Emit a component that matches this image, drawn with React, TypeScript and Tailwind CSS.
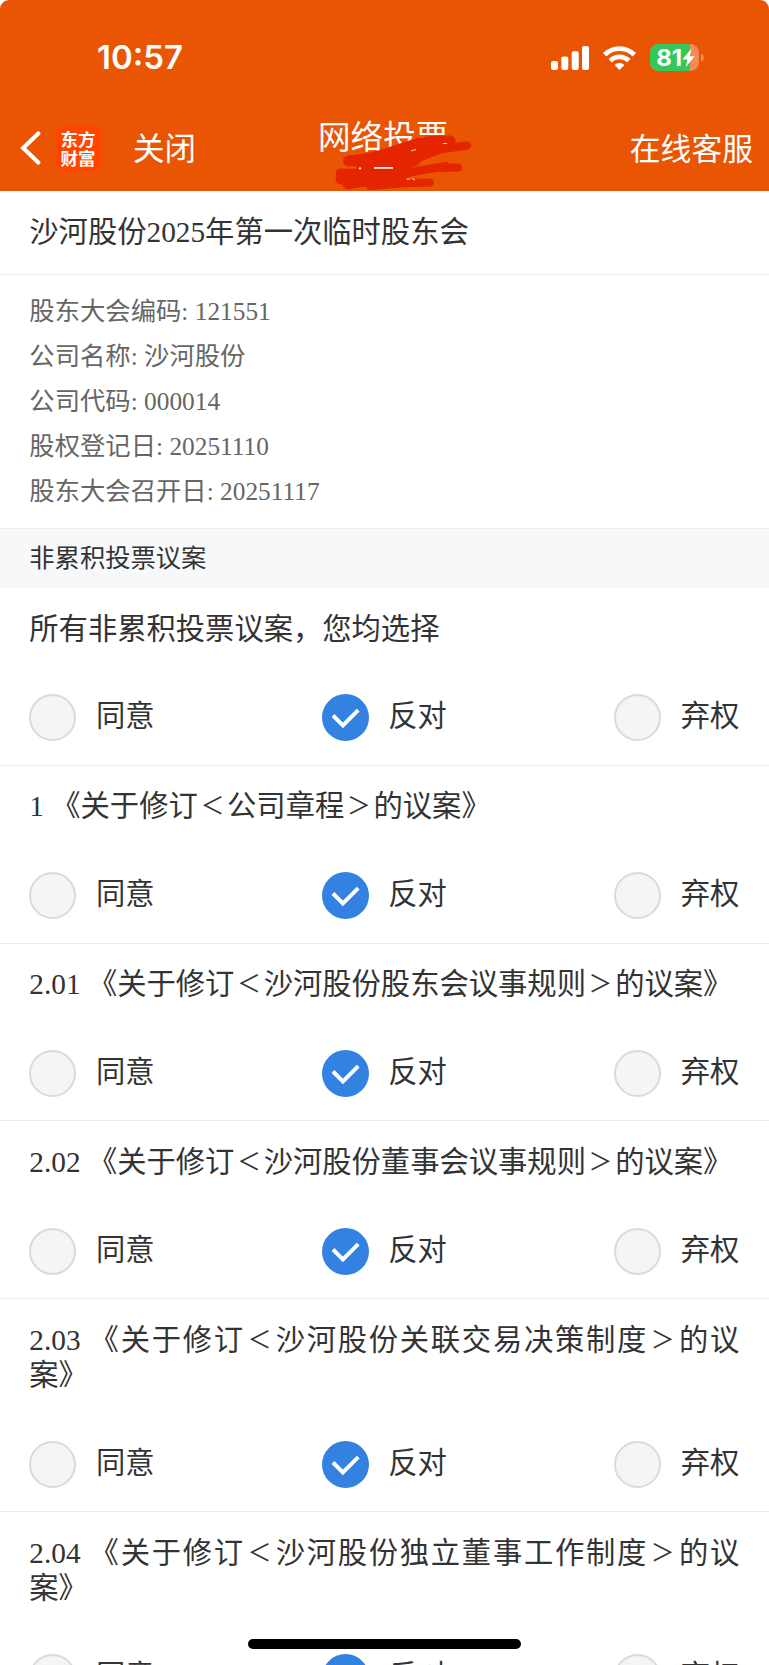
import React, { useState } from 'react';

type Choice = 'agree' | 'against' | 'abstain';

interface Proposal {
  id: string;
  title: string;
}

const OPTIONS: { value: Choice; label: string }[] = [
  { value: 'agree', label: '同意' },
  { value: 'against', label: '反对' },
  { value: 'abstain', label: '弃权' },
];

const MEETING_INFO = [
  { label: '股东大会编码', value: '121551' },
  { label: '公司名称', value: '沙河股份' },
  { label: '公司代码', value: '000014' },
  { label: '股权登记日', value: '20251110' },
  { label: '股东大会召开日', value: '20251117' },
];

const PROPOSALS: Proposal[] = [
  { id: 'all', title: '所有非累积投票议案，您均选择' },
  { id: '1', title: '1 《关于修订＜公司章程＞的议案》' },
  { id: '2.01', title: '2.01 《关于修订＜沙河股份股东会议事规则＞的议案》' },
  { id: '2.02', title: '2.02 《关于修订＜沙河股份董事会议事规则＞的议案》' },
  { id: '2.03', title: '2.03 《关于修订＜沙河股份关联交易决策制度＞的议案》' },
  { id: '2.04', title: '2.04 《关于修订＜沙河股份独立董事工作制度＞的议案》' },
];

const StatusBar: React.FC = () => (
  <div className="h-[115px] pl-[97px] pr-[65px] flex items-center justify-between">
    <span className="font-['Inter',sans-serif] text-[33px] font-semibold leading-none">10:57</span>
    <div className="flex items-center">
      <svg width="38" height="24" viewBox="0 0 38 24" fill="currentColor">
        <rect x="0" y="15" width="7" height="9" rx="2" />
        <rect x="10.3" y="10.5" width="7" height="13.5" rx="2" />
        <rect x="20.7" y="5.3" width="7" height="18.7" rx="2" />
        <rect x="31" y="0" width="7" height="24" rx="2" />
      </svg>
      <svg className="ml-[14px]" width="33" height="24" viewBox="0 0 33 24" fill="none" stroke="currentColor" strokeWidth="4.8">
        <path d="M1.7 8.8 A21 21 0 0 1 31.3 8.8" />
        <path d="M7.2 14.8 A13.2 13.2 0 0 1 25.8 14.8" />
        <path d="M16.5 24 L11.6 19 A7.2 7.2 0 0 1 21.4 19 Z" fill="currentColor" stroke="none" />
      </svg>
      <svg className="ml-[14px]" width="54" height="27" viewBox="0 0 54 27">
        <clipPath id="battery">
          <rect width="49" height="27" rx="8.5" />
        </clipPath>
        <g clipPath="url(#battery)">
          <rect width="49" height="27" fill="#f28b54" />
          <rect width="40" height="27" fill="#34c759" />
        </g>
        <path d="M51 9.5 Q53.8 10.5 53.8 13.5 T51 17.5 Z" fill="#f28b54" />
        <text x="6.2" y="21.6" fill="#fff" fontFamily="Inter, sans-serif" fontSize="22.5" fontWeight="700" textLength="26" lengthAdjust="spacingAndGlyphs">81</text>
        <path d="M41.5 4.5 L32.3 15.4 H37.4 L35.8 23 L44.8 12.2 H39.7 Z" fill="#fff" />
      </svg>
    </div>
  </div>
);

const NavBar: React.FC = () => (
  <div className="relative h-[76px] pl-5 pr-[16px] pb-[11px] flex items-center justify-between font-['Noto_Sans_CJK_SC',sans-serif] leading-none">
    <div className="flex items-center">
      <svg width="21" height="34" viewBox="0 0 21 34" fill="none" stroke="currentColor" strokeWidth="4.2" strokeLinecap="round">
        <path d="M18.3 2.5 L3.2 17 L18.3 31.5" />
      </svg>
      <div className="ml-[14px] w-[46px] h-[46px] rounded-[9px] bg-[#ff4500] flex flex-col items-center justify-center text-[17.5px] font-bold leading-[19px]">
        <span>东方</span>
        <span>财富</span>
      </div>
      <span className="ml-8 pb-[2px] text-[31.5px]">关闭</span>
    </div>
    <h1 className="absolute left-[318px] top-[4px] text-[32.6px]">网络投票</h1>
    <span className="pb-[1px] text-[30.8px]">在线客服</span>
    {/* red marker strokes hiding the subtitle */}
    <svg className="absolute left-[330px] top-[15px]" width="145" height="61" viewBox="330 130 145 61" fill="none" stroke="#e52400" strokeLinecap="round" strokeLinejoin="round">
      <path strokeWidth="11" d="M348.5 161 Q372 160 398 150 T444 141 L450 141 L436 149 L400 160 L362 167" />
      <path strokeWidth="8.5" d="M467 145.5 L441 149 L402 164 L376 173 L340 173" />
      <path strokeWidth="11" d="M341 179 L380 175 L415 160 M348 184 L378 178 L408 172" />
      <path strokeWidth="8" d="M458 167.5 L436 168 L400 174 L380 182 L347 184 M446 166 L410 172" />
      <path strokeWidth="8" d="M370 186 L402 178 M372 186 L400 183.5 L430 182.5" />
      <path stroke="#fff" strokeWidth="1.8" strokeLinecap="butt" d="M359 168.3 H361 M374 167.8 H393" />
      <path stroke="#fbd5c8" strokeWidth="1" strokeLinecap="butt" d="M407 179.4 L410 179 M412 178.5 L415 180 M411 151 L416 149.5 M443 143.5 H447" />
    </svg>
  </div>
);

interface RadioOptionProps {
  label: string;
  checked: boolean;
  onSelect: () => void;
}

const RadioOption: React.FC<RadioOptionProps> = ({ label, checked, onSelect }) => (
  <button onClick={onSelect} className="flex items-center">
    {checked ? (
      <span className="w-[47px] h-[47px] rounded-full bg-[#3382e2] flex items-center justify-center">
        <svg width="47" height="47" viewBox="0 0 47 47" fill="none" stroke="#fff" strokeWidth="3.9">
          <path d="M11 21.5 L20.9 31.4 L36.2 16.1" />
        </svg>
      </span>
    ) : (
      <span className="w-[47px] h-[47px] rounded-full bg-[#f5f5f5] border-2 border-[#dadada]" />
    )}
    <span className="ml-[19.6px] mb-[2px] leading-[35px]">{label}</span>
  </button>
);

// full-width angle brackets are drawn smaller than the em box they sit in
const ProposalTitle: React.FC<{ text: string }> = ({ text }) => (
  <p className="text-justify leading-[35.3px]">
    {text.split(/([＜＞])/).map((part, i) =>
      part === '＜' || part === '＞' ? (
        <span key={i} className="relative -top-[2px] px-[2.7px] text-[23.9px] leading-none">{part}</span>
      ) : (
        part
      )
    )}
  </p>
);

export default function App() {
  const [votes, setVotes] = useState<Record<string, Choice>>({});

  const handleSelect = (id: string, value: Choice) => {
    if (id === 'all') {
      setVotes(Object.fromEntries(PROPOSALS.map(p => [p.id, value])));
    } else {
      setVotes(prev => ({ ...prev, [id]: value }));
    }
  };

  return (
    <div className="relative h-[1665px] overflow-hidden bg-white text-[#333] text-[29.3px] font-['Liberation_Serif','Noto_Sans_CJK_SC',serif]">
      <header className="h-[191px] rounded-t-[9px] bg-[#ea5504] text-white">
        <StatusBar />
        <NavBar />
      </header>

      <h2 className="h-[84px] px-[29.3px] flex items-center border-b border-[#ebebeb]">沙河股份2025年第一次临时股东会</h2>

      <div className="h-[253px] px-[29.3px] pt-[14px] text-[25.35px] leading-[45px] text-[#666]">
        {MEETING_INFO.map(item => (
          <p key={item.label}>{item.label}: {item.value}</p>
        ))}
      </div>

      <div className="h-[60px] px-[29.3px] flex items-center bg-[#f7f8fa] border-t border-[#ebebeb] text-[25.3px]">非累积投票议案</div>

      {PROPOSALS.map(p => (
        <section key={p.id} className="pl-[29.3px] pr-[29.7px] pt-[23.5px] pb-[23.6px] border-b border-[#ebebeb]">
          <ProposalTitle text={p.title} />
          <div className="mt-[47.4px] flex justify-between">
            {OPTIONS.map(o => (
              <RadioOption
                key={o.value}
                label={o.label}
                checked={(votes[p.id] ?? 'against') === o.value}
                onSelect={() => handleSelect(p.id, o.value)}
              />
            ))}
          </div>
        </section>
      ))}

      <div className="absolute bottom-[16px] left-[248px] w-[273px] h-[10px] rounded-full bg-black" />
    </div>
  );
}
